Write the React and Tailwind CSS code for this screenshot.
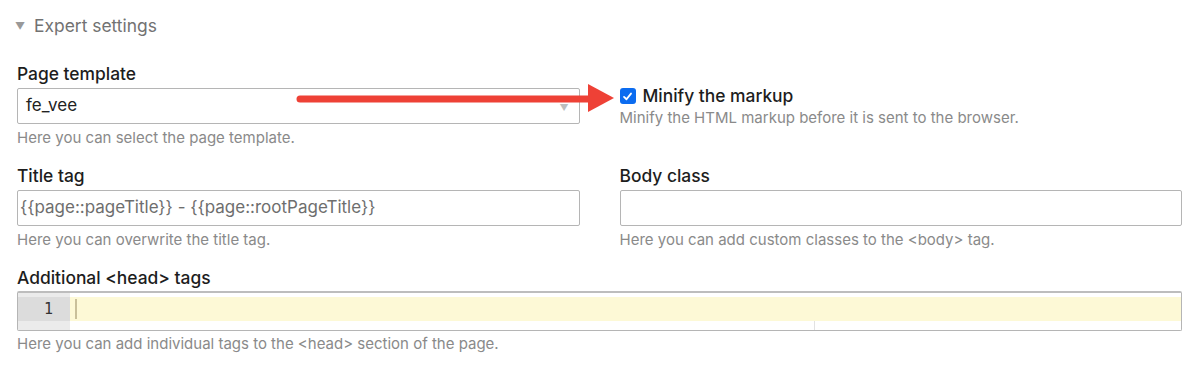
import React from 'react';

// ===== Small pieces =====
function Label({ children }) {
  return <div className="h-5 leading-5 text-[17.4px] font-medium text-[#1d1d1d] mb-1">{children}</div>;
}

function Help({ children }) {
  return <div className="h-[18px] leading-[18px] mt-[5px] text-[15px] text-[#8a8a8a]">{children}</div>;
}

function Arrow() {
  return (
    <svg className="absolute left-[290px] top-[82px] pointer-events-none" width="330" height="34" viewBox="0 0 330 34">
      <line x1="10" y1="17" x2="300" y2="17" stroke="#ee4136" strokeWidth="7" strokeLinecap="round" />
      <polygon points="298,2 324,16 298,30" fill="#ee4136" />
    </svg>
  );
}

export default function App() {
  return (
    <div className="relative w-[1200px] h-[368px] bg-white pl-[17px] pr-[18px] pt-[15px]" style={{ fontFamily: 'Inter, "Noto Sans", sans-serif' }}>
      {/* Legend */}
      <div className="flex items-center h-5 mt-[1px] -ml-[2px] text-[17.4px] text-[#727272]">
        <span className="text-[10px] text-[#999] mr-[9px]">▼</span>
        <span>Expert settings</span>
      </div>

      <div className="grid grid-cols-2 gap-x-[40px] mt-[28px]">
        {/* Page template */}
        <div>
          <Label>Page template</Label>
          <div className="relative h-[36px] border border-[#b5b5b5] rounded-[2px] flex items-center pl-[8px] text-[17px] text-[#222]">
            fe_vee
            <span className="absolute right-[10px] top-[12px] text-[9px] text-[#bdbdbd]">▼</span>
          </div>
          <Help>Here you can select the page template.</Help>
        </div>

        {/* Minify */}
        <div className="pt-[22px]">
          <div className="flex items-center h-5">
            <span className="w-4 h-4 rounded-[3px] bg-[#0b6cf0] flex items-center justify-center mr-[7px]">
              <svg width="11" height="11" viewBox="0 0 12 12">
                <path d="M2.2 6.4 L4.9 9 L9.8 2.8" fill="none" stroke="white" strokeWidth="2" strokeLinecap="round" strokeLinejoin="round" />
              </svg>
            </span>
            <span className="text-[17.4px] font-medium text-[#1d1d1d]">Minify the markup</span>
          </div>
          <div className="h-[18px] leading-[18px] mt-[3px] text-[15px] text-[#8a8a8a]">Minify the HTML markup before it is sent to the browser.</div>
        </div>

        {/* Title tag */}
        <div className="mt-[19px]">
          <Label>Title tag</Label>
          <div className="h-[36px] border border-[#b5b5b5] rounded-[2px] flex items-center pl-[2px] text-[17px] text-[#6e6e6e]">
            {'{{page::pageTitle}} - {{page::rootPageTitle}}'}
          </div>
          <Help>Here you can overwrite the title tag.</Help>
        </div>

        {/* Body class */}
        <div className="mt-[19px]">
          <Label>Body class</Label>
          <div className="h-[36px] border border-[#b5b5b5] rounded-[2px]" />
          <Help>Here you can add custom classes to the &lt;body&gt; tag.</Help>
        </div>

        {/* Additional head tags */}
        <div className="col-span-2 mt-[19px]">
          <div className="h-5 leading-5 text-[17.4px] font-medium text-[#1d1d1d] mb-[3px]">Additional &lt;head&gt; tags</div>
          <div className="h-[40px] border border-[#b5b5b5] border-t-2 border-t-[#bdbdbd] rounded-[2px] flex">
            <div className="w-[52px] bg-[#ebebeb] flex flex-col">
              <div className="h-[4px]" />
              <div className="h-[24px] bg-[#dcdcdc] flex items-center justify-end pr-[17px] text-[15px] text-[#333]" style={{ fontFamily: '"DejaVu Sans Mono", monospace' }}>1</div>
            </div>
            <div className="flex-1 flex flex-col">
              <div className="h-[4px]" />
              <div className="h-[24px] bg-[#fdf9d6] flex items-center pl-[5px]">
                <span className="w-[2px] h-[20px] bg-[#c9c09a]" />
              </div>
              <div className="flex-1 flex">
                <div className="w-[745px] border-r border-[#e2e2e2]" />
              </div>
            </div>
          </div>
          <div className="h-[18px] leading-[18px] mt-[4px] text-[15px] text-[#8a8a8a]">Here you can add individual tags to the &lt;head&gt; section of the page.</div>
        </div>
      </div>

      <Arrow />
    </div>
  );
}
